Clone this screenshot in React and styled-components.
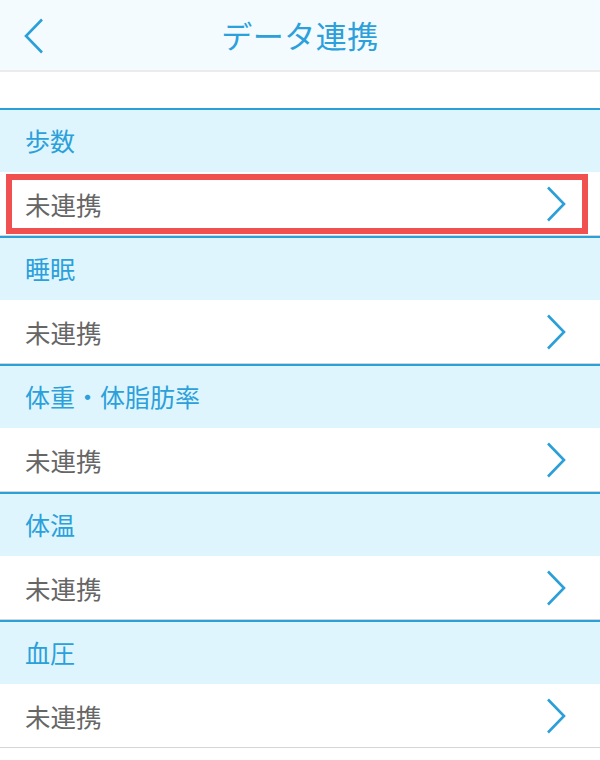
import React from "react";
import styled, { createGlobalStyle } from "styled-components";

const GlobalStyle = createGlobalStyle`
  html, body {
    margin: 0;
    padding: 0;
    background: #ffffff;
  }
  body {
    font-family: "Noto Sans CJK JP", "Noto Sans", sans-serif;
  }
`;

const Page = styled.div`
  width: 600px;
  height: 760px;
  overflow: hidden;
  background: #ffffff;
`;

const Header = styled.header`
  position: relative;
  height: 70px;
  background: #f3fbff;
  border-bottom: 2px solid #ececec;
  display: flex;
  align-items: center;
  justify-content: center;
`;

const BackButton = styled.button`
  position: absolute;
  left: 20px;
  top: 16px;
  width: 28px;
  height: 40px;
  padding: 0;
  border: none;
  background: none;
  display: flex;
  align-items: center;
  justify-content: center;
`;

const Title = styled.h1`
  margin: 0 0 2px;
  font-size: 31px;
  font-weight: 400;
  color: #2ba0da;
  letter-spacing: 0.5px;
`;

const Spacer = styled.div`
  height: 36px;
`;

const Section = styled.section`
  border-top: 2px solid #2a9fd8;
`;

const SectionHeader = styled.div`
  height: 62px;
  background: #def5fe;
  display: flex;
  align-items: center;
  padding: 0 0 3px 25px;
  box-sizing: border-box;
  font-size: 25px;
  color: #2ba0da;
`;

const Row = styled.div`
  position: relative;
  height: 63px;
  border-bottom: 1px solid #d6d6d6;
  background: #ffffff;
  display: flex;
  align-items: center;
  justify-content: space-between;
  padding: 0 34px 0 25px;
  font-size: 25.5px;
  color: #666666;
`;

const Highlight = styled.div`
  position: absolute;
  left: 6px;
  top: 2px;
  width: 582px;
  height: 60px;
  box-sizing: border-box;
  border: 6px solid #f05050;
  pointer-events: none;
`;

const Chevron = ({ dir }) => (
  <svg width="20" height="36" viewBox="0 0 20 36">
    {dir === "left" ? (
      <polyline points="18,1.5 2,18 18,34.5" fill="none" stroke="#2a9fd8" strokeWidth="2.6" />
    ) : (
      <polyline points="2,1.5 18,18 2,34.5" fill="none" stroke="#2a9fd8" strokeWidth="2.6" />
    )}
  </svg>
);

const sections = ["歩数", "睡眠", "体重・体脂肪率", "体温", "血圧"];

export default function App() {
  return (
    <Page>
      <GlobalStyle />
      <Header>
        <BackButton>
          <Chevron dir="left" />
        </BackButton>
        <Title>データ連携</Title>
      </Header>
      <Spacer />
      {sections.map((name, i) => (
        <Section key={name}>
          <SectionHeader>{name}</SectionHeader>
          <Row>
            {i === 0 && <Highlight />}
            <span>未連携</span>
            <Chevron dir="right" />
          </Row>
        </Section>
      ))}
    </Page>
  );
}
